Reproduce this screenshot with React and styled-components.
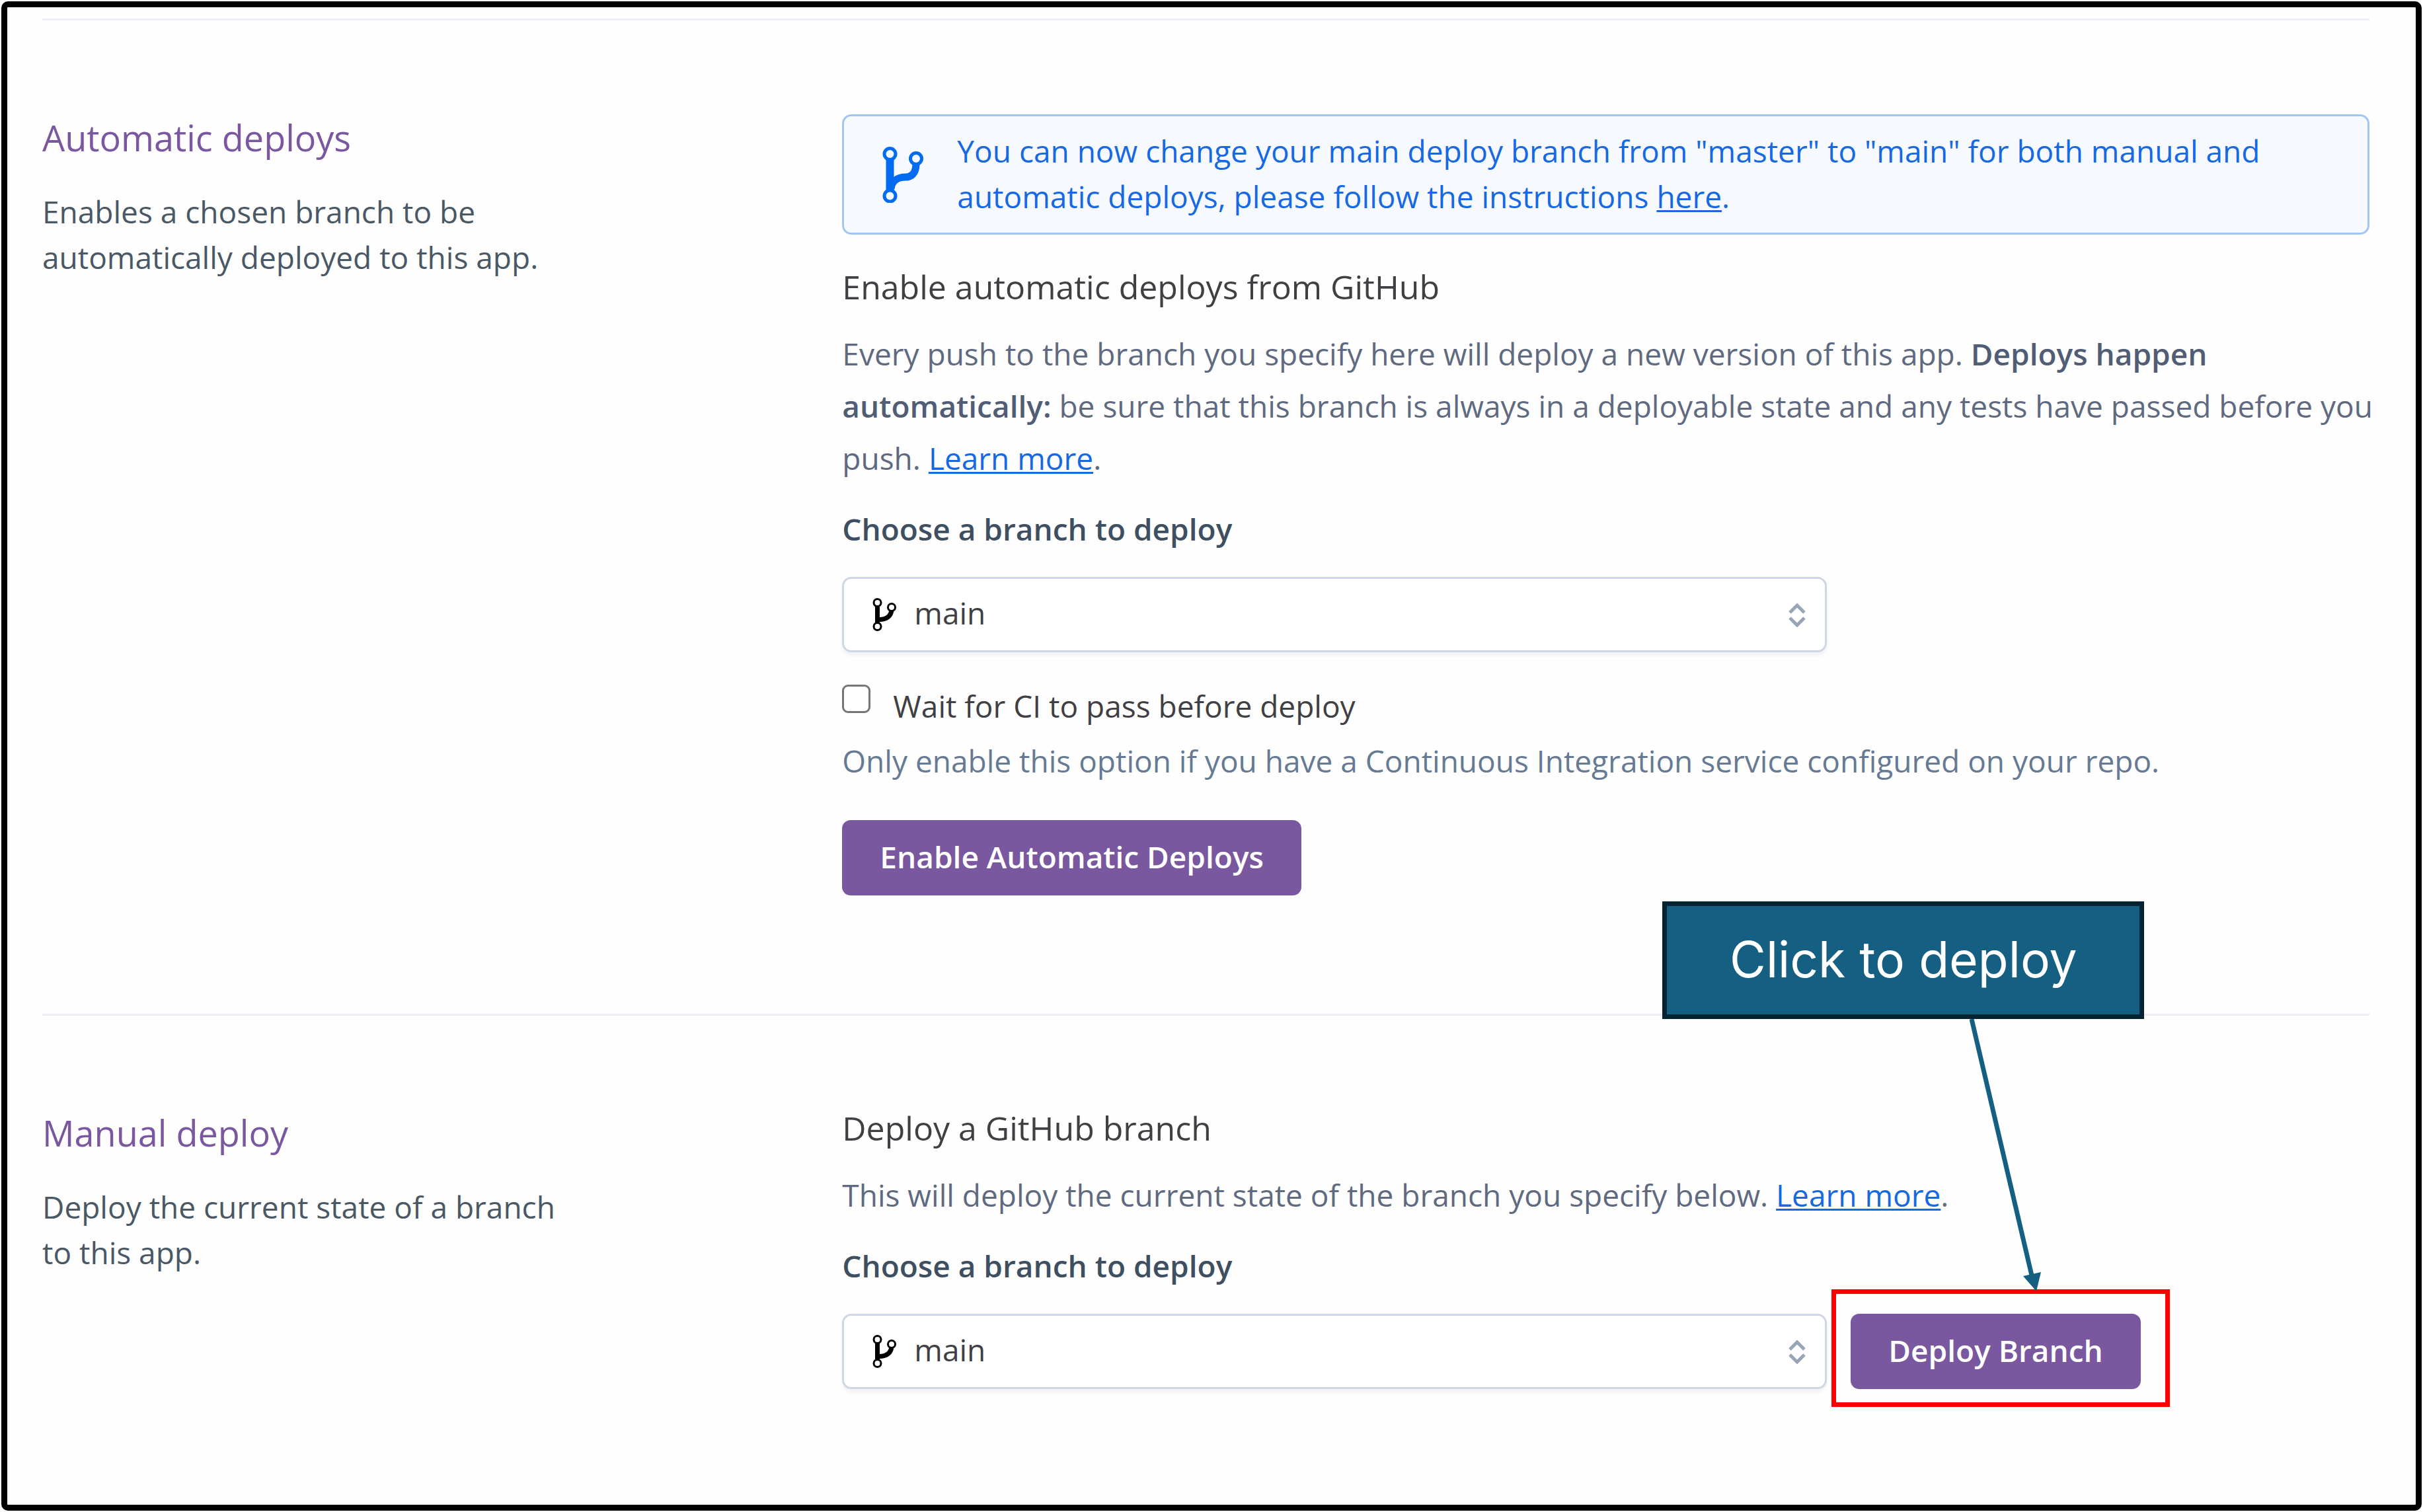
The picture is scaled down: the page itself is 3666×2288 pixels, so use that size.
import React from "react";
import styled, { createGlobalStyle } from "styled-components";

const color = {
  purple: "#79589f",
  blue: "#1669e3",
  icon: "#016cf0",
  ink: "#3f3f44",
  slate: "#4a5866",
  body: "#5f6a80",
  label: "#3f4f62",
  help: "#667a94",
  rule: "#ebeef5",
  field: "#cfd7e6",
  callout: "#156082",
};

const GlobalStyle = createGlobalStyle`
  *, *::before, *::after { box-sizing: border-box; }
  body {
    margin: 0;
    background: #fff;
    font-family: "Open Sans", "Noto Sans", sans-serif;
    font-size: 46px;
    line-height: 69px;
  }
  h2, h3, p { margin: 0; font-weight: 400; }
  button, select, input { font: inherit; margin: 0; }
`;

const Frame = styled.main`
  margin: 2px;
  min-height: calc(100vh - 4px);
  padding: 17px 70px 0 53px;
  border: 9px solid #000;
  border-radius: 10px;
  background: #fefefe;
`;

const Section = styled.section`
  display: grid;
  grid-template-columns: 11fr 21fr;
  padding: 142px 0 179px;
  border-top: 3px solid ${color.rule};

  &:last-child { padding-bottom: 142px; }
`;

const Intro = styled.div`
  display: flex;
  flex-direction: column;
  gap: 43px;
  max-width: 800px;
`;

const Title = styled.h2`
  font-size: 54px;
  line-height: 70px;
  color: ${color.purple};
`;

const Summary = styled.p`
  color: ${color.slate};
`;

const Content = styled.div`
  display: flex;
  flex-direction: column;
  min-width: 0;
`;

const Alert = styled.div`
  display: flex;
  align-items: center;
  gap: 50px;
  margin-bottom: 51px;
  padding: 18px 56px 20px 57px;
  border: 3px solid #a3c6f1;
  border-radius: 14px;
  background: #f6faff;
  color: ${color.blue};

  svg { flex: none; }
`;

const Link = styled.a`
  color: ${color.blue};
  text-decoration: underline;
  text-decoration-thickness: 3px;
  text-underline-offset: 3px;
  text-decoration-skip-ink: none;
`;

const Heading = styled.h3`
  margin-bottom: 34px;
  font-size: 50px;
  line-height: 56px;
  color: ${color.ink};
`;

const Paragraph = styled.p`
  margin: 0 -24px 39px 0;
  line-height: 79px;
  color: ${color.body};
`;

const Strong = styled.strong`
  font-weight: 600;
  color: #505d74;
`;

const FieldLabel = styled.label`
  margin-bottom: 45px;
  font-weight: 600;
  line-height: 56px;
  color: ${color.label};
`;

const FieldRow = styled.div`
  display: flex;
  gap: 36px;
`;

const SelectBox = styled.div`
  position: relative;
  flex: 0 1 1490px;
  min-width: 0;
`;

const Select = styled.select`
  display: block;
  appearance: none;
  width: 100%;
  height: 114px;
  padding: 0 106px 6px;
  border: 3px solid ${color.field};
  border-radius: 14px;
  background: #fff;
  box-shadow: 0 5px 5px rgba(40, 50, 110, 0.06);
  color: ${color.ink};
`;

const SelectMark = styled.span`
  position: absolute;
  top: 50%;
  ${({ $side }) => ($side === "left" ? "left: 46px" : "right: 30px")};
  display: flex;
  transform: translateY(-50%);
  pointer-events: none;
`;

const CheckLabel = styled.label`
  display: flex;
  align-items: flex-start;
  gap: 34px;
  margin: 47px 0 14px;
  color: ${color.ink};
`;

const Checkbox = styled.input`
  appearance: none;
  width: 43px;
  height: 43px;
  margin-top: 2px;
  border: 3px solid #767676;
  border-radius: 9px;
  background: #fff;
`;

const Help = styled.p`
  margin-bottom: 55px;
  color: ${color.help};
`;

const Button = styled.button`
  align-self: flex-start;
  height: 114px;
  padding: 0 57px 4px;
  border: 0;
  border-radius: 13px;
  background: ${color.purple};
  color: #fff;
  font-weight: 600;
  white-space: nowrap;
`;

const Annotated = styled.div`
  position: relative;
  display: flex;
`;

const Highlight = styled.span`
  position: absolute;
  inset: -37px -44px -27px -29px;
  border: 7px solid #f00;
  pointer-events: none;
`;

const Callout = styled.div`
  position: absolute;
  left: -285px;
  bottom: 560px;
  display: flex;
  align-items: center;
  justify-content: center;
  width: 729px;
  height: 178px;
  padding-bottom: 3px;
  border: 7px solid #042433;
  background: ${color.callout};
  color: #fff;
  font-family: Inter, sans-serif;
  font-size: 75px;
  line-height: 90px;
`;

const Arrow = styled.svg`
  position: absolute;
  left: 180px;
  bottom: 146px;
`;

function AlertIcon() {
  return (
    <svg width="64" height="88" viewBox="0 -2 64 88" fill="none" aria-hidden="true">
      <path d="M12.5 20V69" stroke={color.icon} strokeWidth="12" />
      <path d="M52 27C52 41 45 47 36 47C24 47 15 53 14 65" stroke={color.icon} strokeWidth="11" />
      <g fill="#f6faff" stroke={color.icon} strokeWidth="5">
        <circle cx="12.5" cy="12" r="8.5" />
        <circle cx="52" cy="19" r="8.5" />
        <circle cx="12.5" cy="75.5" r="8.5" />
      </g>
    </svg>
  );
}

function BranchIcon() {
  return (
    <svg width="37" height="52" viewBox="0 0 37 52" fill="none" aria-hidden="true">
      <path d="M7.5 12V42" stroke="#000" strokeWidth="7" />
      <path d="M29 19C28 28 22 34 9 33.5" stroke="#000" strokeWidth="7" />
      <g fill="#fff" stroke="#000" strokeWidth="3">
        <circle cx="7.5" cy="8" r="5.5" />
        <circle cx="29" cy="15" r="5.5" />
        <circle cx="7.5" cy="44" r="5.5" />
      </g>
    </svg>
  );
}

function SortIcon() {
  return (
    <svg width="30" height="38" viewBox="0 0 30 38" fill="none" aria-hidden="true">
      <path d="M4 16L15 5L26 16M4 24L15 35L26 24" stroke="#98a5b7" strokeWidth="5" />
    </svg>
  );
}

function BranchSelect({ id }) {
  return (
    <SelectBox>
      <Select id={id} defaultValue="main">
        <option value="main">main</option>
      </Select>
      <SelectMark $side="left">
        <BranchIcon />
      </SelectMark>
      <SelectMark $side="right">
        <SortIcon />
      </SelectMark>
    </SelectBox>
  );
}

export default function App() {
  return (
    <>
      <GlobalStyle />
      <Frame>
        <Section>
          <Intro>
            <Title>Automatic deploys</Title>
            <Summary>Enables a chosen branch to be automatically deployed to this app.</Summary>
          </Intro>
          <Content>
            <Alert>
              <AlertIcon />
              <p>
                You can now change your main deploy branch from "master" to "main" for both manual and
                automatic deploys, please follow the instructions <Link href="#instructions">here</Link>.
              </p>
            </Alert>
            <Heading>Enable automatic deploys from GitHub</Heading>
            <Paragraph>
              Every push to the branch you specify here will deploy a new version of this app.{" "}
              <Strong>Deploys happen automatically:</Strong> be sure that this branch is always in a
              deployable state and any tests have passed before you push.{" "}
              <Link href="#automatic">Learn more</Link>.
            </Paragraph>
            <FieldLabel htmlFor="auto-branch">Choose a branch to deploy</FieldLabel>
            <FieldRow>
              <BranchSelect id="auto-branch" />
            </FieldRow>
            <CheckLabel>
              <Checkbox type="checkbox" />
              Wait for CI to pass before deploy
            </CheckLabel>
            <Help>
              Only enable this option if you have a Continuous Integration service configured on your
              repo.
            </Help>
            <Button type="button">Enable Automatic Deploys</Button>
          </Content>
        </Section>
        <Section>
          <Intro>
            <Title>Manual deploy</Title>
            <Summary>Deploy the current state of a branch to this app.</Summary>
          </Intro>
          <Content>
            <Heading>Deploy a GitHub branch</Heading>
            <Paragraph>
              This will deploy the current state of the branch you specify below.{" "}
              <Link href="#manual">Learn more</Link>.
            </Paragraph>
            <FieldLabel htmlFor="manual-branch">Choose a branch to deploy</FieldLabel>
            <FieldRow>
              <BranchSelect id="manual-branch" />
              <Annotated>
                <Button type="button">Deploy Branch</Button>
                <Highlight />
                <Callout>Click to deploy</Callout>
                <Arrow width="110" height="414" viewBox="0 0 110 414" aria-hidden="true">
                  <path d="M3 0L94 388" stroke={color.callout} strokeWidth="7" fill="none" />
                  <path d="M81 389L108 383L101 412Z" fill={color.callout} />
                </Arrow>
              </Annotated>
            </FieldRow>
          </Content>
        </Section>
      </Frame>
    </>
  );
}
